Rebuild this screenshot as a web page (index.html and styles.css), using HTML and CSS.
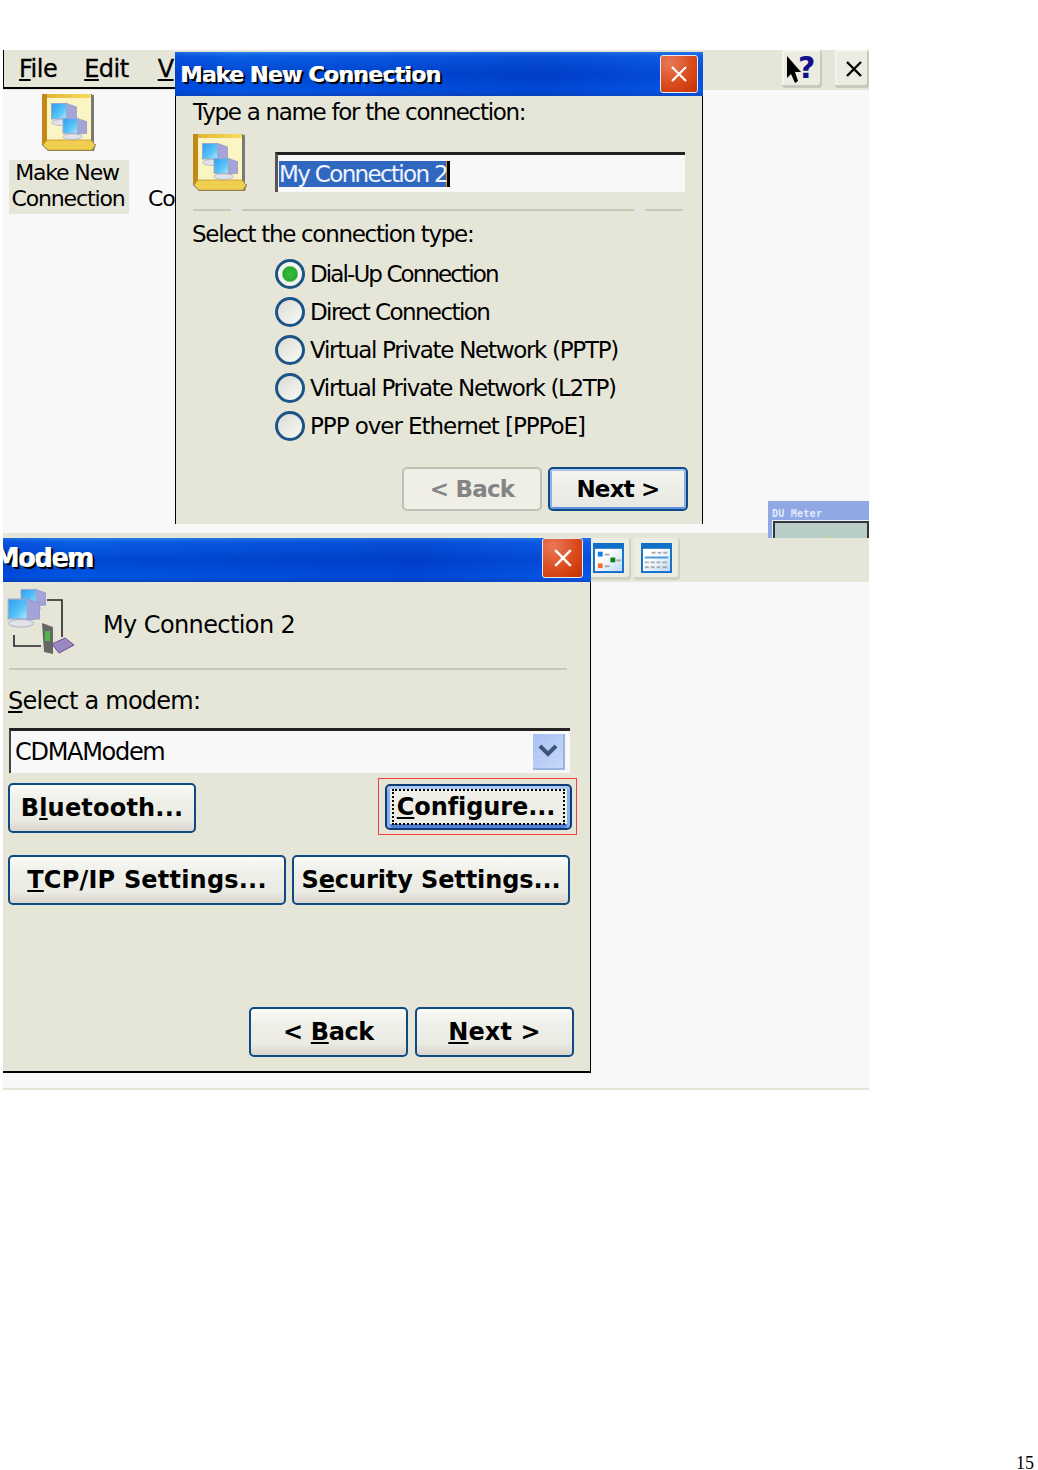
FILE: index.html
```html
<!DOCTYPE html>
<html lang="en">
<head>
    <meta charset="UTF-8">
    <meta name="viewport" content="width=device-width, initial-scale=1.0">
    <title>Make New Connection</title>
    <link rel="stylesheet" href="styles.css">
</head>
<body>
    <svg class="sprite" width="0" height="0">
        <defs>
            <linearGradient id="screen" x1="0" y1="0" x2="1" y2="1">
                <stop offset="0" stop-color="#2f9cf0"/>
                <stop offset=".6" stop-color="#58c4f8"/>
                <stop offset="1" stop-color="#b0ecfc"/>
            </linearGradient>
            <linearGradient id="gold" x1="0" y1="0" x2="1" y2="0">
                <stop offset="0" stop-color="#e0b030"/>
                <stop offset="1" stop-color="#f8dc60"/>
            </linearGradient>
            <linearGradient id="tile" x1="0" y1="0" x2="1" y2="1">
                <stop offset=".4" stop-color="#ffffff"/>
                <stop offset="1" stop-color="#b8d8f8"/>
            </linearGradient>
            <symbol id="pc" viewBox="0 0 26 24">
                <path d="M15 1 L26 5 V17 L15 18 Z" fill="#a4a4d8" stroke="#8c8cc0" stroke-width=".6"/>
                <rect x="1" y="1.5" width="15" height="15.5" fill="url(#screen)" stroke="#98a8d0"/>
                <ellipse cx="11" cy="20.5" rx="10" ry="3" fill="#e2e2ea" stroke="#a8a8b8" stroke-width=".7"/>
            </symbol>
            <symbol id="netfolder" viewBox="0 0 54 58">
                <path d="M0 0 H50 V1 H52 V50 H54 L52 57 H6 L0 51 Z" fill="#7a7a72"/>
                <rect x="0" y="0" width="49" height="50" fill="#fbf5c4"/>
                <path d="M0 0 H49 V4 H5 V50 L0 50 Z" fill="url(#gold)"/>
                <path d="M0 0 H5 V50 H0 Z" fill="#c08a18"/>
                <path d="M1 51 L5 46 H49 L53 51 L50 56 H6 Z" fill="#f0cf50" stroke="#c09828" stroke-width=".8"/>
                <use href="#pc" x="8" y="8" width="27" height="24"/>
                <use href="#pc" x="20" y="23" width="25" height="23"/>
            </symbol>
            <symbol id="modem" viewBox="0 0 68 68">
                <use href="#pc" x="13" y="0" width="26" height="24"/>
                <use href="#pc" x="0" y="9" width="33" height="31"/>
                <path d="M40 12 H55 V49 M7 47 V58 H34" fill="none" stroke="#222" stroke-width="1.6"/>
                <path d="M35 35 L46 39 V66 L37 64 Z" fill="#666"/>
                <rect x="38" y="43" width="5" height="10" fill="#50b848"/>
                <path d="M45 56 L58 50 L67 57 L52 65 Z" fill="#9c88c0" stroke="#6a4a8a"/>
            </symbol>
        </defs>
    </svg>

    <div class="page">
        <section class="shot shot-top">
            <div class="toolbar">
                <nav class="menu">
                    <span><u>F</u>ile</span>
                    <span><u>E</u>dit</span>
                    <span class="menu-cut"><u>V</u></span>
                </nav>
                <div class="tools">
                    <div class="tool-btn help-btn">
                        <svg width="38" height="36" viewBox="0 0 38 36">
                            <path d="M4 5 L4 27 L8 23 L12 32 L15 30 L12 21 L18 21 Z" fill="#000"/>
                            <text x="15" y="27" class="help-mark">?</text>
                        </svg>
                    </div>
                    <div class="tool-btn close-tool">
                        <svg width="18" height="18" viewBox="0 0 18 18">
                            <path d="M2 2 L16 16 M16 2 L2 16" stroke="#000" stroke-width="2.4"/>
                        </svg>
                    </div>
                </div>
            </div>

            <div class="desktop-icons">
                <div class="desk-icon">
                    <svg class="folder-small" width="54" height="58"><use href="#netfolder"/></svg>
                    <span class="desk-label">Make New<br>Connection</span>
                </div>
                <span class="desk-cut">Co</span>
            </div>

            <div class="dialog dialog-new">
                <header class="titlebar">
                    <span class="title-text">Make New Connection</span>
                    <span class="close-x"><svg width="18" height="18" viewBox="0 0 18 18"><path d="M2 2 L16 16 M16 2 L2 16" stroke="#fff" stroke-width="2.2"/></svg></span>
                </header>
                <div class="dialog-body new-body">
                    <p class="line name-label">Type a name for the connection:</p>
                    <div class="name-row">
                        <svg width="54" height="58"><use href="#netfolder"/></svg>
                        <div class="name-input"><span class="selected">My Connection 2</span></div>
                    </div>
                    <div class="groove groove-gaps"></div>
                    <p class="line type-label">Select the connection type:</p>
                    <ul class="radios">
                        <li><i class="radio on"></i>Dial-Up Connection</li>
                        <li><i class="radio"></i>Direct Connection</li>
                        <li><i class="radio"></i>Virtual Private Network (PPTP)</li>
                        <li><i class="radio"></i>Virtual Private Network (L2TP)</li>
                        <li><i class="radio"></i>PPP over Ethernet [PPPoE]</li>
                    </ul>
                    <div class="nav-row nav-new">
                        <button class="btn btn-off" type="button">&lt; Back</button>
                        <button class="btn btn-default" type="button">Next &gt;</button>
                    </div>
                </div>
            </div>
        </section>

        <section class="shot shot-bottom">
            <div class="du-meter">
                <div class="du-title">DU Meter</div>
                <div class="du-graph"><i></i></div>
            </div>
            <div class="toolbar band">
                <div class="view-btn">
                    <svg width="31" height="30" viewBox="0 0 32 31">
                        <rect x="1" y="1" width="30" height="29" fill="url(#tile)" stroke="#1070c8" stroke-width="2"/>
                        <rect x="1" y="1" width="30" height="5" fill="#1070c8"/>
                        <rect x="5" y="9" width="5" height="5" fill="#1080e8"/>
                        <rect x="12" y="11" width="5" height="2" fill="#aaa"/>
                        <rect x="18" y="15" width="5" height="5" fill="#108010"/>
                        <rect x="24" y="17" width="5" height="2" fill="#aaa"/>
                        <rect x="5" y="21" width="5" height="5" fill="#f87038"/>
                        <rect x="12" y="23" width="5" height="2" fill="#aaa"/>
                    </svg>
                </div>
                <div class="view-btn">
                    <svg width="31" height="30" viewBox="0 0 32 31">
                        <rect x="1" y="1" width="30" height="29" fill="url(#tile)" stroke="#1070c8" stroke-width="2"/>
                        <rect x="1" y="1" width="30" height="5" fill="#1070c8"/>
                        <path d="M11 10 H15 M17 10 H21 M23 10 H27" stroke="#aaa" stroke-width="2"/>
                        <rect x="4" y="14" width="24" height="2" fill="#4898e0"/>
                        <path d="M4 20 H8 M10 20 H14 M16 20 H20 M22 20 H27 M4 25 H8 M10 25 H14 M16 25 H20 M22 25 H27" stroke="#aaa" stroke-width="2"/>
                    </svg>
                </div>
            </div>

            <div class="dialog dialog-modem">
                <header class="titlebar">
                    <span class="title-text title-cut">Modem</span>
                    <span class="close-x"><svg width="20" height="20" viewBox="0 0 18 18"><path d="M2 2 L16 16 M16 2 L2 16" stroke="#fff" stroke-width="2.2"/></svg></span>
                </header>
                <div class="dialog-body modem-body">
                    <div class="conn-row">
                        <svg width="68" height="68"><use href="#modem"/></svg>
                        <span class="conn-name">My Connection 2</span>
                    </div>
                    <div class="groove"></div>
                    <p class="line modem-label"><u>S</u>elect a modem:</p>
                    <div class="combo">
                        <span class="combo-text">CDMAModem</span>
                        <span class="combo-arrow">
                            <svg width="20" height="14" viewBox="0 0 20 14"><path d="M2 2 L10 10 L18 2" fill="none" stroke="#3c5478" stroke-width="4"/></svg>
                        </span>
                    </div>
                    <div class="btn-row row-first">
                        <button class="btn bluetooth" type="button">B<u>l</u>uetooth...</button>
                        <div class="red-mark">
                            <button class="btn btn-focus" type="button"><span><u>C</u>onfigure...</span></button>
                        </div>
                    </div>
                    <div class="btn-row row-second">
                        <button class="btn tcp" type="button"><u>T</u>CP/IP Settings...</button>
                        <button class="btn security" type="button">S<u>e</u>curity Settings...</button>
                    </div>
                    <div class="nav-row nav-modem">
                        <button class="btn back" type="button">&lt; <u>B</u>ack</button>
                        <button class="btn next" type="button"><u>N</u>ext &gt;</button>
                    </div>
                </div>
            </div>
        </section>

        <footer class="page-no">15</footer>
    </div>
</body>
</html>
```

FILE: styles.css
```css
html, body {
    margin: 0;
    padding: 0;
    background: #fff;
}
body {
    font-family: "DejaVu Sans", sans-serif;
    color: #000;
    overflow: hidden;
}
.sprite {
    position: absolute;
}
.page {
    height: 1470px;
    padding: 50px 0 0 3px;
    box-sizing: border-box;
    display: flex;
    flex-direction: column;
}
.shot {
    width: 866px;
    position: relative;
    background: #f8f8f8;
    flex: none;
}
.shot-top {
    height: 483px;
}
.shot-bottom {
    height: 557px;
    box-sizing: border-box;
    border-bottom: 2px solid #e6e6d8;
}
.page-no {
    margin-top: auto;
    padding-right: 4px;
    text-align: right;
    font-family: "Liberation Serif", serif;
    font-size: 18px;
    line-height: 14px;
}

/* toolbars */
.toolbar {
    height: 40px;
    background: #e6e6d8;
    display: flex;
    box-sizing: border-box;
}
.menu {
    width: 172px;
    flex: none;
    box-sizing: border-box;
    border-left: 1px solid #000;
    border-bottom: 2px solid #000;
    margin-bottom: 1px;
    padding-left: 15px;
    display: flex;
    gap: 27px;
    align-items: center;
    font-size: 24px;
    letter-spacing: -.5px;
    -webkit-text-stroke: .3px #000;
    overflow: hidden;
    white-space: nowrap;
}
.menu-cut {
    margin-left: 2px;
}
.tools {
    margin-left: auto;
    display: flex;
    gap: 13px;
}
.tool-btn {
    height: 38px;
    background: #ecece2;
    box-shadow: inset -2px -3px 0 #c8c8bc, inset 2px 2px 0 #f4f4ec;
    border-radius: 3px;
    display: flex;
    align-items: center;
    justify-content: center;
}
.help-btn {
    width: 40px;
}
.close-tool {
    width: 34px;
    box-sizing: border-box;
    padding-left: 4px;
}
.help-mark {
    font-family: "DejaVu Sans", sans-serif;
    font-weight: bold;
    font-size: 30px;
    fill: #10108c;
}
.band {
    height: 49px;
    padding: 5px 0 0 587px;
    position: relative;
    z-index: 2;
}
.view-btn {
    width: 41px;
    height: 42px;
    padding: 5px 0 0 3px;
    box-sizing: border-box;
    background: #ecece2;
    border-radius: 3px;
    box-shadow: inset -2px -3px 0 #d0d0c4;
}
.view-btn + .view-btn {
    width: 46px;
    margin-left: 3px;
    padding-left: 7px;
}

/* desktop icons */
.desktop-icons {
    display: flex;
    align-items: flex-end;
    padding: 4px 0 0 6px;
}
.desk-icon {
    width: 120px;
    display: flex;
    flex-direction: column;
    align-items: center;
    gap: 8px;
}
.folder-small {
    margin-right: 1px;
}
.desk-label {
    width: 120px;
    height: 54px;
    padding-right: 2px;
    box-sizing: border-box;
    background: #e6e6d8;
    text-align: center;
    font-size: 22px;
    line-height: 26px;
    letter-spacing: -1.15px;
    white-space: nowrap;
    text-indent: -2px;
}
.desk-cut {
    margin-left: 19px;
    margin-bottom: 2px;
    font-size: 22px;
    line-height: 27px;
    letter-spacing: -1.2px;
}

/* dialogs */
.dialog {
    position: absolute;
    z-index: 3;
    display: flex;
    flex-direction: column;
    box-sizing: border-box;
    background: #e6e6d8;
}
.dialog-new {
    left: 172px;
    top: 2px;
    width: 528px;
    height: 472px;
}
.dialog-modem {
    left: 0;
    top: 5px;
    width: 588px;
    height: 535px;
}
.titlebar {
    height: 44px;
    flex: none;
    display: flex;
    align-items: center;
    justify-content: space-between;
    padding: 0 6px;
    overflow: hidden;
    background: linear-gradient(90deg, rgba(0, 40, 200, .25), rgba(0, 60, 220, 0) 12%, rgba(0, 30, 170, .25) 70%, rgba(20, 90, 240, .3)), linear-gradient(180deg, #2a80ea 0, #0a5ee4 10%, #0048d0 50%, #0056e4 88%, #0a48c0 100%);
    box-sizing: border-box;
}
.dialog-modem .titlebar {
    padding: 0 8px 0 0;
    align-items: flex-start;
}
.title-text {
    color: #fff;
    font-weight: bold;
    font-size: 22px;
    letter-spacing: -.75px;
    text-shadow: 1px 1px 0 #000, 2px 2px 0 #000, -1px 0 0 #e8f0ff;
}
.title-cut {
    font-size: 26px;
    letter-spacing: -1.6px;
    margin: 5px 0 0 -9px;
}
.close-x {
    width: 38px;
    height: 38px;
    margin-right: -1px;
    border: 1px solid #e8e8f0;
    border-radius: 3px;
    box-sizing: border-box;
    background: radial-gradient(circle at 25% 20%, #e87858, #d84818 60%, #c03000);
    display: flex;
    align-items: center;
    justify-content: center;
}
.dialog-modem .close-x {
    width: 41px;
    height: 40px;
    margin: 0;
}
.dialog-body {
    flex: 1;
    box-sizing: border-box;
    font-size: 23px;
    letter-spacing: -1.3px;
    white-space: nowrap;
}
.line {
    margin: 0;
    line-height: 30px;
}

/* first dialog */
.new-body {
    padding: 0 15px 0 17px;
    border-left: 1px solid #000;
    border-right: 1px solid #000;
}
.name-label {
    margin-top: 1px;
}
.name-row {
    display: flex;
    align-items: flex-start;
    gap: 28px;
    margin-top: 7px;
}
.name-input {
    width: 410px;
    height: 40px;
    margin-top: 18px;
    padding: 6px 0 0 1px;
    box-sizing: border-box;
    background: #f8f8f8;
    border-top: 3px solid #222;
    border-left: 3px solid #555;
    line-height: 26px;
    letter-spacing: -1.65px;
}
.name-input .selected {
    display: inline-block;
    background: #3068c0;
    color: #f0f4ff;
    border-right: 3px solid #000;
    box-shadow: inset -1px 0 0 #d89020;
}
.groove {
    height: 2px;
    background: #c8c8b8;
}
.groove-gaps {
    width: 490px;
    margin-top: 17px;
    background: linear-gradient(90deg, #c8c8b8 38px, #e2e2e8 38px, #e2e2e8 49px, #c8c8b8 49px, #c8c8b8 441px, #e2e2e8 441px, #e2e2e8 452px, #c8c8b8 452px);
}
.type-label {
    margin-top: 8px;
    margin-left: -1px;
}
.radios {
    list-style: none;
    margin: 6px 0 0 82px;
    padding: 0;
}
.radios li {
    height: 38px;
    display: flex;
    align-items: center;
    gap: 5px;
}
.radios li:nth-child(1) {
    letter-spacing: -1.9px;
}
.radios li:nth-child(2) {
    letter-spacing: -1.6px;
}
.radios li:nth-child(4) {
    letter-spacing: -1.37px;
}
.radios li:nth-child(5) {
    letter-spacing: -1.05px;
}
.radio {
    width: 30px;
    height: 30px;
    flex: none;
    box-sizing: border-box;
    border-radius: 50%;
    border: 3px solid #1c5488;
    background: linear-gradient(135deg, #dcdcd4, #fafaf6);
}
.radio.on {
    background: radial-gradient(circle, #38c040 0, #28a830 7px, #f4f4ee 8.5px);
}
.nav-row {
    display: flex;
    justify-content: flex-end;
    gap: 6px;
}
.nav-new {
    margin: 22px -1px 0 0;
}
.nav-new .btn {
    width: 140px;
    height: 44px;
    font-size: 23px;
    letter-spacing: -.8px;
}

/* buttons */
.btn {
    height: 50px;
    padding: 0;
    box-sizing: border-box;
    border: 2px solid #0f4a84;
    border-radius: 5px;
    background: linear-gradient(180deg, #fbfbf8 0, #f0f0ea 30%, #ebebe4 75%, #d8d4cc 100%);
    font-family: "DejaVu Sans", sans-serif;
    font-weight: bold;
    font-size: 24px;
    letter-spacing: .2px;
    color: #000;
    white-space: nowrap;
}
.btn-off {
    border-color: #c0c0b4;
    background: #efefe8;
    color: #848484;
}
.btn-default {
    background: linear-gradient(180deg, #f4f4f0, #e8e8e2);
    box-shadow: inset 0 2px 0 #a8c8f0, inset 2px 0 0 #88b0e8, inset -2px 0 0 #88b0e8, inset 0 -2px 0 #6090e0;
}

/* second dialog */
.modem-body {
    padding: 6px 0 0 4px;
    border-right: 1px solid #000;
    border-bottom: 2px solid #000;
    font-size: 24px;
}
.conn-row {
    display: flex;
    align-items: center;
    gap: 28px;
    height: 68px;
}
.conn-name {
    margin-top: 6px;
    letter-spacing: -.6px;
}
.modem-body .groove {
    width: 558px;
    margin: 12px 0 0 2px;
}
.modem-label {
    margin: 16px 0 0 1px;
    letter-spacing: -.75px;
}
.combo {
    width: 561px;
    height: 45px;
    margin: 12px 0 0 2px;
    box-sizing: border-box;
    background: #f8f8f8;
    border-top: 3px solid #222;
    border-left: 2px solid #444;
    display: flex;
    align-items: center;
    justify-content: space-between;
    padding: 0 5px 0 4px;
}
.combo-text {
    letter-spacing: -1.3px;
}
.combo-arrow {
    width: 32px;
    height: 36px;
    box-sizing: border-box;
    background: linear-gradient(135deg, #a8c0f4, #c8d8fa);
    border-right: 2px solid #9ab4e0;
    border-bottom: 2px solid #9ab4e0;
    display: flex;
    align-items: center;
    justify-content: center;
}
.btn-row {
    display: flex;
    justify-content: space-between;
    margin-left: 1px;
}
.row-first {
    width: 569px;
    margin-top: 10px;
    align-items: flex-start;
}
.row-second {
    width: 562px;
    margin-top: 20px;
}
.bluetooth {
    width: 188px;
}
.red-mark {
    width: 199px;
    height: 57px;
    margin-top: -5px;
    box-sizing: border-box;
    border: 1px solid #f04040;
    padding: 5px 4px 0 6px;
}
.btn-focus {
    width: 187px;
    height: 46px;
    border-color: #0f3a78;
    background: linear-gradient(180deg, #f0f0ea, #ecece4);
    box-shadow: inset 0 3px 0 #a8c8f0, inset 3px 0 0 #88b0e8, inset -3px 0 0 #88b0e8, inset 0 -4px 0 #5080d8;
    letter-spacing: -.1px;
    display: flex;
    align-items: center;
    justify-content: center;
}
.btn-focus span {
    padding: 3px 8px 3px 3px;
    border: 2px dotted #000;
    line-height: 26px;
}
.tcp,
.security {
    width: 278px;
}
.security {
    letter-spacing: -.1px;
}
.nav-modem {
    width: 567px;
    margin-top: 102px;
    gap: 7px;
}
.nav-modem .btn {
    width: 159px;
}
.nav-modem .back {
    letter-spacing: -.4px;
}
.nav-modem .next {
    letter-spacing: .1px;
}

.du-meter {
    position: absolute;
    right: 0;
    top: -32px;
    width: 101px;
    height: 37px;
    background: #90a8e4;
    z-index: 3;
    overflow: hidden;
}
.du-title {
    font-family: "DejaVu Sans Mono", monospace;
    font-weight: bold;
    font-size: 10px;
    line-height: 12px;
    letter-spacing: .25px;
    padding: 7px 0 0 4px;
    color: #e0e8ff;
    height: 20px;
    box-sizing: border-box;
}
.du-graph {
    height: 17px;
    margin-left: 5px;
    border: 2px solid #303838;
    border-bottom: none;
    outline: 1px solid #eef;
    background: #b8ccc8;
    position: relative;
}
.du-graph i {
    position: absolute;
    left: 51px;
    top: 12px;
    width: 1px;
    height: 5px;
    background: #e8e020;
}
```
